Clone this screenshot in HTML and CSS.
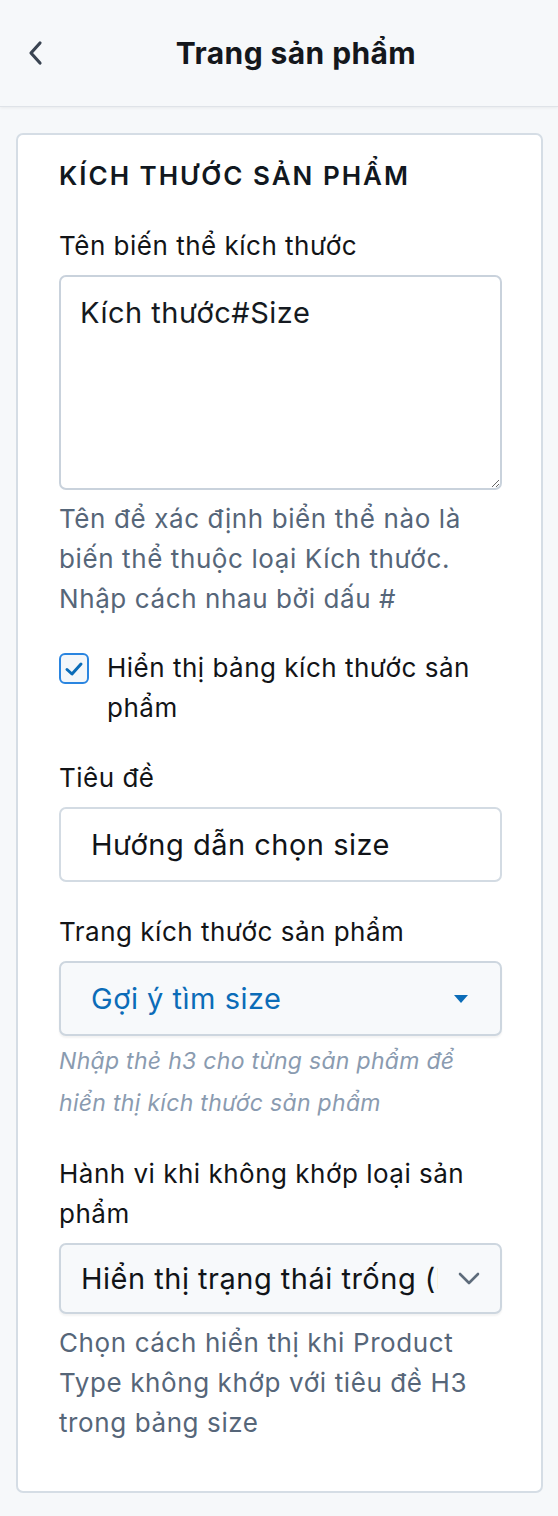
FILE: index.html
```html
<!DOCTYPE html>
<html lang="vi">
<head>
<meta charset="utf-8">
<title>Trang sản phẩm</title>
<link rel="stylesheet" href="styles.css">
</head>
<body>
<header class="topbar">
  <button class="back" aria-label="Quay lại">
    <svg width="16" height="26" viewBox="0 0 16 26"><path d="M13 3 L4 13 L13 23" fill="none" stroke="#3a4452" stroke-width="3.2" stroke-linecap="round" stroke-linejoin="round"/></svg>
  </button>
  <h1 class="title">Trang sản phẩm</h1>
</header>
<main class="page">
  <section class="card">
    <h2 class="section-title">KÍCH THƯỚC SẢN PHẨM</h2>

    <div class="field">
      <label class="label">Tên biến thể kích thước</label>
      <textarea class="textarea">Kích thước#Size</textarea>
      <p class="help">Tên để xác định biển thể nào là biến thể thuộc loại Kích thước. Nhập cách nhau bởi dấu #</p>
    </div>

    <label class="check">
      <span class="box"><svg width="20" height="16" viewBox="0 0 20 16"><path d="M3 8.5 L8 13 L17 3" fill="none" stroke="#0b6cb8" stroke-width="3" stroke-linecap="round" stroke-linejoin="round"/></svg></span>
      <span class="check-text">Hiển thị bảng kích thước sản phẩm</span>
    </label>

    <div class="field">
      <label class="label">Tiêu đề</label>
      <div class="input">Hướng dẫn chọn size</div>
    </div>

    <div class="field">
      <label class="label">Trang kích thước sản phẩm</label>
      <div class="select link">
        <span class="select-text">Gợi ý tìm size</span>
        <svg class="caret" width="16" height="10" viewBox="0 0 16 10"><path d="M1 1 H15 L8 9 Z" fill="#0b6cb8"/></svg>
      </div>
      <p class="help italic">Nhập thẻ h3 cho từng sản phẩm để hiển thị kích thước sản phẩm</p>
    </div>

    <div class="field last">
      <label class="label">Hành vi khi không khớp loại sản phẩm</label>
      <div class="select plain">
        <span class="select-text clip">Hiển thị trạng thái trống (không hiển thị)</span>
        <svg class="chev" width="22" height="14" viewBox="0 0 22 14"><path d="M2 2 L11 11 L20 2" fill="none" stroke="#5e6c7b" stroke-width="2.6" stroke-linecap="round" stroke-linejoin="round"/></svg>
      </div>
      <p class="help">Chọn cách hiển thị khi Product Type không khớp với tiêu đề H3 trong bảng size</p>
    </div>
  </section>
</main>
</body>
</html>
```

FILE: styles.css
```css
* { box-sizing: border-box; }
html, body { margin: 0; padding: 0; }
body {
  width: 558px;
  min-height: 1516px;
  background: #f6f8fa;
  font-family: Inter, "Noto Sans", "DejaVu Sans", sans-serif;
  color: #111418;
}
.topbar {
  height: 107px;
  display: flex;
  align-items: center;
  background: #f6f8fa;
  border-bottom: 1.5px solid #dfe3e8;
  box-shadow: 0 1px 3px rgba(0,0,0,0.06);
}
.back {
  width: 56px;
  height: 56px;
  margin-left: 7px;
  border: 0;
  background: none;
  display: flex;
  align-items: center;
  justify-content: center;
  padding: 0;
}
.title {
  flex: 1;
  margin: 0 29px 0 0;
  text-align: center;
  font-size: 30px;
  font-weight: 700;
  color: #14171c;
  letter-spacing: 0.4px;
}
.page {
  padding: 26px 15px 25px 16px;
}
.card {
  background: #fff;
  border: 2px solid #d5dde5;
  border-radius: 7px;
  padding: 24px 39px 48px 41px;
}
.section-title {
  margin: 0 0 33px;
  font-size: 26px;
  font-weight: 600;
  letter-spacing: 2px;
  color: #111820;
  line-height: 34px;
}
.field {
  display: flex;
  flex-direction: column;
  margin-bottom: 30px;
}
.field.last { margin-bottom: 0; }
.label {
  font-size: 26px;
  line-height: 40px;
  letter-spacing: 0.5px;
  color: #121417;
  margin-bottom: 9px;
}
.textarea {
  display: block;
  width: 100%;
  height: 215px;
  border: 2px solid #c9d2dc;
  border-radius: 7px;
  padding: 16px 19px;
  font-family: inherit;
  font-size: 29px;
  letter-spacing: 0.5px;
  line-height: 40px;
  color: #151a21;
  resize: vertical;
  background: #fff;
}
.help {
  margin: 9px 0 0;
  font-size: 26px;
  line-height: 40px;
  letter-spacing: 0.6px;
  color: #566679;
}
.help.italic {
  font-style: italic;
  color: #8a9bb0;
  font-size: 23px;
  letter-spacing: 0.3px;
  line-height: 42px;
  margin-top: 4px;
}
.check {
  display: flex;
  align-items: flex-start;
  gap: 18px;
  margin: -1px 0 30px;
}
.box {
  flex: none;
  width: 30px;
  height: 31px;
  margin-top: 5px;
  border: 2px solid #2a85e0;
  border-radius: 6px;
  background: #f4f7fa;
  display: flex;
  align-items: center;
  justify-content: center;
}
.check-text {
  font-size: 26px;
  line-height: 40px;
  letter-spacing: 0.5px;
  color: #121417;
}
.input {
  height: 75px;
  border: 2px solid #d3dbe3;
  border-radius: 7px;
  padding: 0 30px;
  display: flex;
  align-items: center;
  font-size: 29px;
  letter-spacing: 0.5px;
  color: #111418;
  background: #fff;
}
.select {
  height: 75px;
  border: 2px solid #cdd6df;
  border-radius: 7px;
  display: flex;
  align-items: center;
  background: #f7f9fb;
  box-shadow: 0 2px 2px rgba(0,0,0,0.05);
  font-size: 29px;
  letter-spacing: 0.5px;
}
.select.link { padding: 0 31px 0 30px; color: #0b6cb8; }
.select.plain { padding: 0 20px 0 20px; color: #111418; height: 71px; }
.select-text { flex: 1; white-space: nowrap; overflow: hidden; }
.select-text.clip { max-width: 359px; text-overflow: clip; margin-right: 20px; }
.caret { flex: none; }
.chev { flex: none; }
```
